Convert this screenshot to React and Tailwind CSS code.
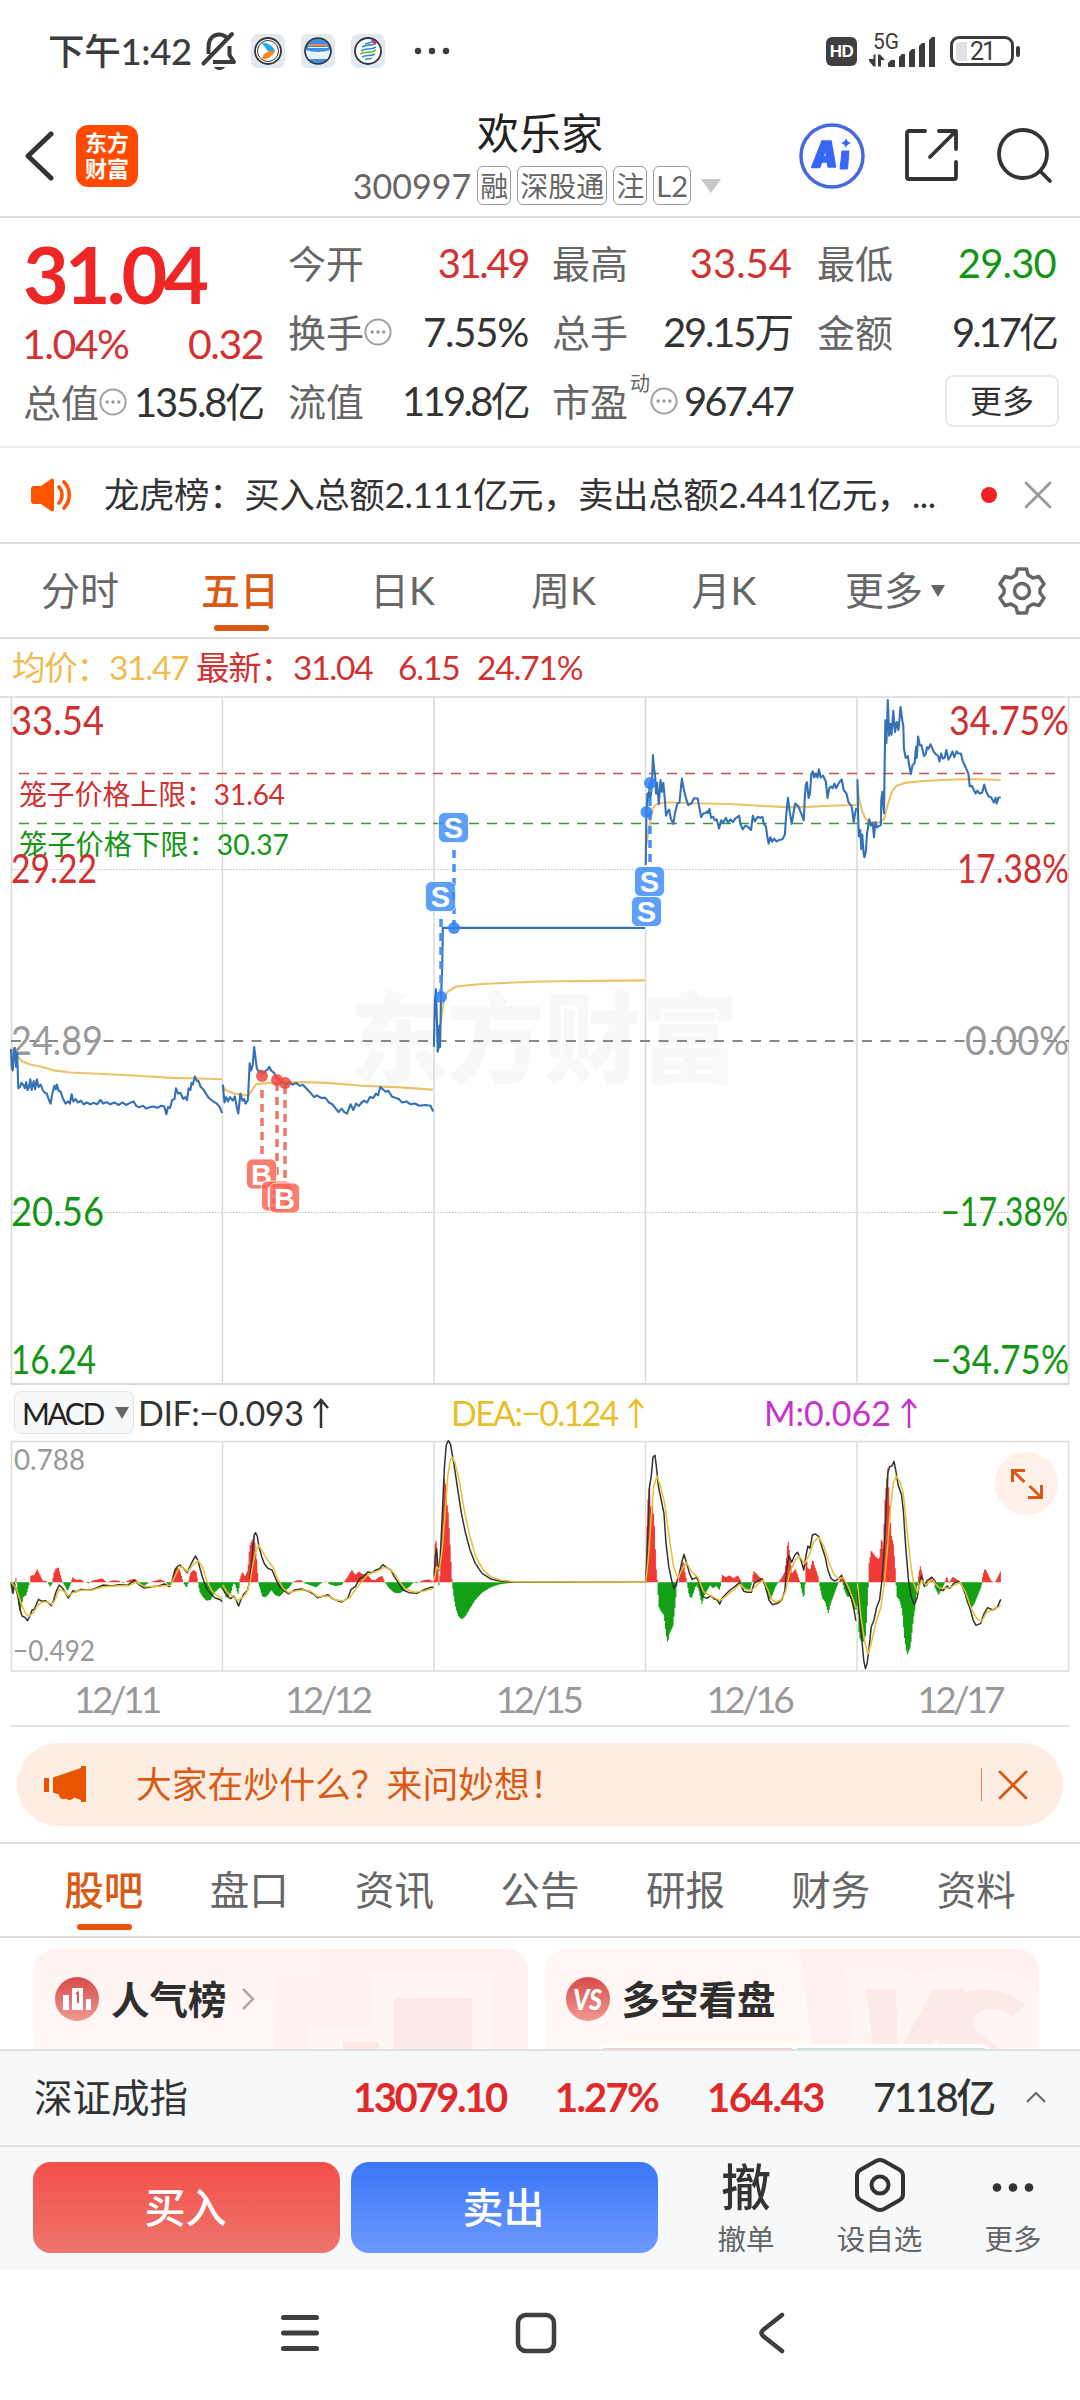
import React from 'react';

const FONT = "Lato, 'Noto Sans CJK SC', sans-serif";

// Séries du graphique : une liste "x,y" par séance
const PRICE_LEFT = [
  '32,1005 34,1060 37,1065 40,1010 43,1002 46,1055 50,1015 53,1115 58,1112 62,1100 68,1106 72,1115 76,1098 80,1120 84,1112 88,1090 92,1120 98,1095 102,1118 107,1090 112,1112 118,1105 124,1120 130,1128 136,1130 142,1148 147,1158 152,1130 158,1108 162,1118 165,1105 170,1122 176,1125 182,1142 190,1158 198,1152 203,1158 208,1132 213,1152 220,1145 226,1155 235,1150 243,1160 252,1155 262,1160 272,1156 282,1160 292,1148 300,1158 310,1154 320,1160 332,1155 345,1162 355,1155 366,1162 378,1156 388,1152 396,1165 405,1168 415,1164 425,1172 435,1168 445,1166 458,1170 468,1164 477,1166 483,1188 488,1168 494,1170 500,1148 507,1145 511,1115 517,1130 524,1128 532,1145 538,1140 543,1148 548,1115 553,1120 556,1100 560,1105 566,1082 572,1095 576,1094 582,1110 590,1118 598,1130 606,1142 614,1148 622,1154 630,1158 638,1168 645,1185',
  '647,1105 652,1155 657,1140 662,1152 668,1140 676,1150 682,1138 688,1170 692,1186 698,1130 704,1150 709,1145 713,1158 720,1148 725,1045 729,1065 734,1050 738,1000 742,1030 746,1060 752,1070 758,1066 764,1075 772,1066 778,1062 782,1055 788,1066 796,1072 802,1085 810,1092 820,1096 830,1105 840,1098 850,1105 860,1100 870,1108 880,1106 890,1116 900,1126 912,1140 920,1135 932,1142 945,1142 955,1155 965,1160 975,1172 983,1182 992,1172 1000,1182 1008,1186 1018,1160 1026,1176 1034,1158 1042,1165 1050,1155 1058,1150 1066,1155 1074,1140 1084,1142 1092,1130 1098,1135 1104,1112 1112,1118 1120,1125 1128,1122 1138,1138 1148,1142 1158,1145 1168,1155 1180,1152 1192,1160 1205,1158 1218,1164 1235,1162 1250,1164 1258,1180',
  '1260,1000 1263,870 1266,838 1269,930 1271,1013 1274,1000 1276,940 1278,1000 1281,850 1284,790 1286,666 1873,666',
];
const PRICE_RIGHT = [
  '307,490 309,350 312,290 315,310 318,262 321,300 325,270 328,182 331,220 334,235 337,290 340,260 345,320 350,252 354,285 358,260 362,300 366,352 371,340 375,335 380,360 387,375 393,340 399,318 405,315 412,248 417,275 423,300 430,322 440,318 447,303 458,304 462,325 468,356 475,345 480,345 485,340 488,345 492,333 497,358 503,355 508,365 513,362 520,388 526,365 532,372 540,358 546,372 553,362 560,370 567,360 578,352 583,378 589,390 596,380 603,382 613,392 618,352 624,368 632,355 640,358 646,355 650,375 656,382 660,410 664,430 669,412 674,425 680,416 686,424 695,420 704,418 711,405 715,350 720,302 725,340 731,375 737,340 741,318 750,325 757,342 766,365 769,300 772,265 775,258 780,302 784,290 788,235 792,228 796,245 801,235 806,245 810,222 815,245 822,240 830,256 835,302 840,275 845,270 850,275 855,262 860,275 868,260 876,250 882,280 890,290 896,315 905,325 911,370 916,340 919,330',
  '922,250 924,360 926,410 930,392 933,445 936,405 939,450 942,468 946,455 950,400 956,362 961,380 966,372 970,412 974,370 979,385 985,380 990,378 991,310 994,285 997,320 999,345 1001,200 1003,85 1006,148 1010,28 1014,128 1018,95 1021,125 1026,58 1031,118 1036,90 1041,112 1047,48 1052,85 1055,100 1057,165 1062,190 1068,185 1073,215 1077,235 1082,210 1088,205 1092,160 1094,190 1098,130 1103,155 1108,155 1115,185 1120,180 1124,160 1128,165 1134,152 1140,165 1145,175 1150,180 1156,185 1160,200 1165,178 1170,192 1175,190 1180,168 1186,195 1192,185 1198,172 1203,188 1210,172 1215,178 1222,178 1228,200 1234,212 1240,225 1244,235 1248,270 1254,268 1260,280 1265,290 1270,282 1277,290 1284,288 1290,265 1296,285 1303,298 1310,300 1318,315 1323,302 1326,318 1331,302 1338,300',
];
const AVG_LEFT = [
  '34,1000 42,1012 50,1025 62,1038 85,1048 120,1055 155,1065 205,1071 300,1075 400,1080 500,1086 580,1088 645,1090',
  '647,1110 655,1120 680,1130 700,1133 722,1135 735,1115 745,1103 790,1100 880,1098 950,1100 1050,1108 1150,1112 1257,1119',
  '1276,960 1281,925 1286,890 1290,860 1300,845 1325,830 1400,823 1568,816 1873,813',
];
const AVG_RIGHT = [
  '310,430 315,390 322,360 328,330 335,322 345,318 365,315 450,317 550,319 650,325 720,328 766,328 840,324 920,322',
  '922,275 928,310 935,338 945,360 955,370 985,372 1000,360 1010,320 1022,285 1035,268 1060,260 1110,255 1170,252 1250,249 1338,252',
];

const DIF_LEFT = [
  '32,637 38,670 42,640 46,655 52,680 58,718 64,738 72,742 80,752 88,735 93,720 100,718 106,702 112,688 122,694 132,692 140,698 149,707 156,690 163,665 172,645 182,655 190,668 198,684 206,672 212,662 222,665 235,658 250,661 265,659 280,654 300,645 325,648 345,644 370,646 390,632 405,645 420,654 440,650 460,648 478,642 492,650 500,635 508,600 515,590 522,585 530,592 537,600 544,608 552,588 560,572 568,558 575,572 582,600 590,628 600,655 612,672 625,684 640,689 645,695',
  '647,655 653,668 661,680 670,686 678,678 686,690 693,708 700,688 708,672 718,662 724,640 730,590 735,530 738,495 742,488 747,498 752,530 760,560 768,582 778,595 790,600 800,625 812,650 825,662 838,672 855,660 875,657 895,663 910,672 922,683 940,678 952,674 965,686 980,692 993,696 1010,684 1020,658 1032,650 1045,625 1055,622 1068,606 1080,608 1092,600 1102,596 1112,584 1122,592 1135,600 1145,620 1158,640 1170,660 1188,668 1210,670 1230,660 1250,652 1259,652',
  '1261,620 1264,560 1268,535 1272,590 1276,600 1280,530 1285,420 1290,300 1296,225 1302,212 1308,222 1318,280 1328,350 1340,430 1352,490 1365,540 1380,580 1400,610 1425,627 1455,634 1500,636 1873,637',
];
const DIF_RIGHT = [
  '307,637 312,520 318,350 323,320 328,262 334,256 338,290 344,350 352,390 360,430 366,520 374,590 382,630 389,656 396,640 404,615 411,580 418,553 426,580 434,610 442,628 455,622 463,640 472,680 485,685 495,677 508,688 515,690 522,702 530,683 540,672 552,660 566,650 580,637 592,664 602,667 614,667 622,640 634,632 645,626 655,650 665,690 675,704 690,700 702,690 711,662 716,600 723,556 731,577 740,555 748,547 757,568 766,600 772,560 778,528 784,535 791,495 800,492 810,500 820,535 828,560 836,600 845,625 855,633 865,628 876,616 885,640 895,665 906,690 912,720 917,752',
  '922,660 928,740 934,800 940,870 945,896 950,880 956,830 962,770 970,750 978,710 986,690 992,640 998,560 1005,420 1010,310 1015,290 1022,288 1028,274 1033,300 1040,345 1050,375 1055,420 1062,530 1070,630 1078,680 1087,704 1096,680 1102,640 1108,618 1116,650 1124,632 1138,622 1146,632 1158,655 1170,662 1182,648 1190,655 1202,640 1215,634 1225,645 1238,680 1250,720 1258,750 1266,766 1280,760 1290,730 1300,713 1315,720 1328,712 1338,688',
];
const DEA_LEFT = [
  '32,637 45,650 55,680 65,710 75,732 85,738 97,728 110,705 122,697 135,695 150,703 160,690 172,658 185,663 198,678 212,668 235,661 265,661 300,650 345,647 375,647 395,636 420,650 460,649 495,646 505,625 518,597 527,590 545,605 560,585 575,572 588,590 600,630 615,662 630,677 645,686',
  '647,645 660,668 675,678 690,692 705,682 718,664 727,630 735,580 742,545 750,525 760,540 775,568 792,590 808,630 822,655 838,668 860,662 885,659 905,666 922,680 952,678 975,690 995,693 1015,684 1030,662 1045,642 1062,620 1080,608 1100,602 1115,592 1130,596 1145,610 1160,635 1178,658 1205,667 1235,662 1259,655',
  '1261,630 1268,590 1276,598 1284,540 1292,440 1300,320 1308,270 1314,262 1322,280 1335,340 1350,430 1365,500 1382,560 1402,598 1425,620 1455,631 1500,635 1873,637',
];
const DEA_RIGHT = [
  '307,637 315,560 322,460 330,350 340,318 350,350 362,400 375,500 388,590 400,625 412,600 425,577 440,605 458,622 475,665 495,677 522,692 545,675 580,643 597,658 614,662 630,645 648,630 660,655 672,688 685,696 700,690 713,665 725,610 740,572 752,558 768,580 782,555 795,515 810,502 825,530 840,580 855,615 868,626 880,622 895,650 910,690 917,715',
  '922,640 932,740 942,810 952,852 962,820 975,760 990,710 1000,640 1010,520 1018,410 1026,340 1034,318 1045,335 1055,370 1065,470 1075,570 1085,640 1096,667 1108,630 1120,645 1138,628 1160,655 1185,655 1220,637 1235,665 1252,715 1268,745 1282,755 1298,725 1315,720 1330,712 1338,705',
];
const HIST_LEFT =
  '30,637 36,672 40,650 43,637 46,622 49,640 52,680 56,725 62,712 68,680 76,676 84,645 87,637 89,617 100,615 108,597 116,615 124,632 132,632 138,637 146,650 152,640 156,610 162,596 170,592 178,625 182,637 190,650 196,664 204,645 207,637 210,622 222,630 235,628 245,637 258,640 268,632 285,628 297,625 310,637 328,631 345,632 358,640 375,630 392,626 402,637 418,648 432,638 445,634 465,628 475,633 482,637 492,648 497,637 505,605 512,590 522,600 532,637 542,654 547,637 553,610 562,600 570,606 575,637 580,665 590,682 600,692 612,690 625,665 640,652 645,660 649,650 656,682 664,680 672,665 677,640 684,645 691,675 695,650 697,625 704,605 712,620 720,600 725,530 730,515 738,500 745,560 750,637 755,655 762,680 770,682 778,675 788,660 800,676 812,680 825,665 840,652 850,637 862,631 875,631 885,640 900,645 918,652 932,640 945,634 958,643 975,648 992,645 1000,634 1010,620 1022,600 1032,615 1042,604 1052,612 1065,612 1080,630 1090,630 1100,622 1110,618 1118,637 1130,655 1145,668 1160,670 1175,660 1190,650 1200,637 1210,640 1225,632 1245,628 1259,635 1261,600 1265,490 1270,560 1274,640 1276,658 1278,600 1284,480 1288,350 1292,318 1297,390 1302,430 1308,540 1313,637 1318,680 1324,715 1332,740 1342,748 1352,738 1365,715 1380,690 1400,668 1425,652 1450,643 1480,639 1520,637';
const HIST_RIGHT =
  '308,600 312,405 317,345 323,430 327,400 332,460 337,590 341,637 345,710 352,725 360,735 366,790 371,820 376,790 386,770 392,710 398,640 402,637 408,610 415,570 422,610 427,640 434,680 440,684 447,665 453,645 460,655 470,702 478,675 486,660 494,645 502,655 512,648 522,660 526,637 529,615 540,622 550,616 562,625 575,616 583,632 590,652 600,660 610,658 615,640 620,603 628,610 636,620 645,628 652,645 660,672 668,690 676,672 684,650 694,635 704,620 711,605 716,560 720,505 726,560 732,610 742,597 750,620 756,640 762,670 766,688 770,640 773,560 778,595 785,600 792,568 800,595 808,620 812,645 820,685 828,695 837,730 845,698 852,680 862,650 870,632 876,615 882,655 892,680 900,680 910,715 919,720 922,700 927,800 932,812 940,815 946,795 951,700 954,637 956,580 962,540 968,552 975,560 985,570 992,500 997,540 1001,400 1005,350 1010,295 1015,400 1020,495 1026,520 1032,600 1036,680 1044,690 1052,720 1058,800 1066,855 1076,830 1084,750 1090,710 1096,650 1099,620 1104,587 1110,610 1116,640 1124,650 1128,637 1134,620 1142,628 1148,655 1158,675 1168,655 1175,640 1181,618 1188,640 1198,620 1210,628 1222,637 1230,655 1240,700 1250,718 1262,700 1272,675 1282,650 1286,615 1292,595 1300,610 1310,632 1320,638 1328,625 1337,604';

const DAY_LINES = [222.5, 434, 645.5, 857];

// Interpole l'histogramme et sépare les barres positives et négatives
const buildBars = (data) => {
  const pts = data.split(' ').map((p) => p.split(',').map(Number));
  let up = '';
  let down = '';
  let i = 0;
  for (let x = pts[0][0]; x <= pts[pts.length - 1][0]; x += 2.7) {
    while (i < pts.length - 2 && pts[i + 1][0] < x) i += 1;
    const [x0, y0] = pts[i];
    const [x1, y1] = pts[i + 1];
    const y = y0 + ((y1 - y0) * (x - x0)) / (x1 - x0);
    if (y < 636) up += `M${x.toFixed(1)} 637V${y.toFixed(1)}`;
    else if (y > 638) down += `M${x.toFixed(1)} 637V${y.toFixed(1)}`;
  }
  return { up, down };
};

const Series = ({ data, color, width = 2.1 }) =>
  data.map((points) => (
    <polyline
      key={points.slice(0, 12)}
      points={points}
      fill="none"
      stroke={color}
      strokeWidth={width}
      strokeLinejoin="round"
      vectorEffect="non-scaling-stroke"
    />
  ));

const Histogram = ({ data }) => {
  const { up, down } = buildBars(data);
  return (
    <>
      <path d={up} stroke="#f23a35" strokeWidth="1.1" vectorEffect="non-scaling-stroke" />
      <path d={down} stroke="#14a014" strokeWidth="1.1" vectorEffect="non-scaling-stroke" />
    </>
  );
};

const Label = ({ x, y, w, size = 41, color, children, ...rest }) => (
  <text x={x} y={y} textLength={w} lengthAdjust="spacingAndGlyphs" fontSize={size} fill={color} fontFamily={FONT} {...rest}>
    {children}
  </text>
);

const Marker = ({ x, y, type }) => (
  <g>
    <rect
      x={x - 15}
      y={y - 15}
      width="30"
      height="30"
      rx="6"
      fill={type === 'S' ? '#3b8af8' : '#f8624f'}
      fillOpacity="0.82"
      stroke="#fff"
      strokeWidth="0.8"
    />
    <text x={x} y={y + 10.5} textAnchor="middle" fontSize="29" fontWeight="700" fill="#fff" fontFamily="'Liberation Sans', sans-serif">
      {type}
    </text>
  </g>
);

const MoreHint = () => (
  <svg className="shrink-0" width="28" height="30" viewBox="0 0 28 30" fill="none">
    <circle cx="14" cy="15" r="12.6" stroke="#a0a0a0" strokeWidth="2" />
    <circle cx="8.2" cy="15" r="1.7" fill="#999" />
    <circle cx="14" cy="15" r="1.7" fill="#999" />
    <circle cx="19.8" cy="15" r="1.7" fill="#999" />
  </svg>
);

const StatusBar = () => (
  <div className="flex h-[105px] items-center justify-between pb-[3px] pl-12 pr-[60px] text-[#3c3c3c]">
    <div className="flex items-center">
      <span className="w-[146px] whitespace-nowrap text-[36.5px] font-medium leading-none tracking-[-0.3px]">下午1:42</span>
      <svg className="ml-[6px]" width="38" height="40" viewBox="0 0 38 40" fill="none" stroke="#3c3c3c" strokeWidth="4">
        <path d="M8.500 23V16C8.500 8 13 3.500 19 3.500c3 0 5.500 1 7.500 3" />
        <path d="M29.500 15v9l4.500 7H13" strokeLinejoin="round" />
        <path d="M3.500 32.500 32 3" strokeLinecap="round" />
        <path d="M14 36h11c-2 4-9 4-11 0z" fill="#3c3c3c" stroke="none" />
      </svg>
      <div className="ml-[13px] flex gap-4">
        <svg width="34" height="34" viewBox="0 0 34 34">
          <rect width="34" height="34" rx="7" fill="#e4e9ef" />
          <circle cx="17" cy="17" r="13" fill="#fff" stroke="#30343c" strokeWidth="1.800" />
          <circle cx="17" cy="17" r="10.500" fill="#fff" stroke="#30343c" strokeWidth="1" />
          <path d="M11 9c5-1 11 3 13 8-3 2-7 1-8-1z" fill="#22a9ee" />
          <path d="M24 17c-2 5-8 9-13 8 1-5 5-9 13-8z" fill="#f58a1e" />
        </svg>
        <svg width="34" height="34" viewBox="0 0 34 34">
          <rect width="34" height="34" rx="7" fill="#e4e9ef" />
          <circle cx="17" cy="17" r="13" fill="#3f8fdf" />
          <path d="M5 16c7 2.500 17 2.500 24 0v3l-2 6H7l-2-6z" fill="#e8f3fd" />
          <path d="M8 11h18" stroke="#e8855a" strokeWidth="2" />
          <path d="M7 13.500h20" stroke="#fff" strokeWidth="1" />
          <circle cx="17" cy="17" r="13" fill="none" stroke="#30343c" strokeWidth="1.600" />
        </svg>
        <svg width="34" height="34" viewBox="0 0 34 34" fill="none">
          <rect width="34" height="34" rx="7" fill="#e4e9ef" />
          <circle cx="17" cy="17" r="13" fill="#fff" stroke="#30343c" strokeWidth="1.800" />
          <path d="M11 13c4-3 9-1 13-3M10 17c5-4 9 0 15-4" stroke="#2a8fc8" strokeWidth="1.600" />
          <path d="M9 20c6-4 9 1 16-4" stroke="#7cb83a" strokeWidth="1.800" />
          <path d="M11 23c5-3 8 0 13-3M14 25.500c3-1 5 0 7-1.500M14 10c3-1 5-1 7-2" stroke="#2a8fc8" strokeWidth="1.500" />
          <path d="m21 6 4 4" stroke="#d0307c" strokeWidth="3" />
        </svg>
      </div>
      <svg className="ml-7" width="38" height="8" viewBox="0 0 38 8" fill="#3c3c3c">
        <circle cx="5" cy="4" r="3.200" />
        <circle cx="19" cy="4" r="3.200" />
        <circle cx="33" cy="4" r="3.200" />
      </svg>
    </div>
    <div className="flex items-center">
      <div className="flex h-[29px] w-[31px] items-center justify-center rounded-[6px] bg-[#3f3f3f] font-['Liberation_Sans',sans-serif] text-[17px] font-bold leading-none tracking-[-0.5px] text-white">
        HD
      </div>
      <svg className="ml-[12px] -mt-[3px]" width="68" height="38" viewBox="0 -2 68 38" fill="#3c3c3c">
        <text x="4" y="15.500" fontSize="22" fontFamily="Roboto, sans-serif" textLength="26" lengthAdjust="spacingAndGlyphs">5G</text>
        <path d="M0 28V26H4.500V21.500H6.500V33.500H4.500zM9 33.500V21.500H11L16 27H12V33.500z" />
        <path d="M19 34v-4l3-3h4v7zM30 34v-10l3-3h3v13zM40 34v-15l3-3h3v18zM50 34v-21l3-3h3v24zM60 34V7l3-3h3v30z" />
      </svg>
      <div className="ml-[13px] flex h-[30px] w-[64px] items-center rounded-[9px] border-[3px] border-[#3c3c3c] pl-[3px]">
        <div className="h-[19px] w-[11px] rounded-l-[4px] bg-[#e2e2e2]" />
        <span className="ml-[3px] font-['Roboto',sans-serif] text-[25px] leading-none tracking-[-2px]">21</span>
      </div>
      <div className="ml-[2px] h-[11px] w-[4px] rounded-full bg-[#3c3c3c]" />
    </div>
  </div>
);

const Header = () => (
  <header className="flex h-[113px] justify-between border-b-2 border-[#dcdcdc] px-[24px]">
    <div className="flex h-[102px] w-[300px] items-center">
      <svg width="30" height="50" viewBox="0 0 30 50" fill="none" stroke="#333" strokeWidth="5" strokeLinecap="round" strokeLinejoin="round">
        <path d="M27 3 4 25 27 47" />
      </svg>
      <div className="ml-[22px] flex h-[62px] w-[62px] flex-col items-center justify-center rounded-[12px] bg-[#ff4a00] text-[22px] font-bold leading-[26px] text-white">
        <span>东方</span>
        <span>财富</span>
      </div>
    </div>
    <div className="flex flex-col items-center">
      <h1 className="mt-[6px] text-[42px] font-normal leading-[44px] text-[#222]">欢乐家</h1>
      <div className="mr-[6px] mt-[11px] flex items-center gap-[6px] text-[31px] leading-none text-[#666]">
        <span className="text-[34px]">300997</span>
        <span className="flex h-[39px] w-[34px] items-center justify-center rounded-[6px] border-[1.5px] border-[#999] text-[28px]">融</span>
        <span className="flex h-[39px] w-[90px] items-center justify-center rounded-[6px] border-[1.5px] border-[#999] text-[28px]">深股通</span>
        <span className="flex h-[39px] w-[34px] items-center justify-center rounded-[6px] border-[1.5px] border-[#999] text-[28px]">注</span>
        <span className="flex h-[39px] w-[38px] items-center justify-center rounded-[6px] border-[1.5px] border-[#999] text-[29px]">L2</span>
        <svg className="ml-[4px]" width="20" height="14" viewBox="0 0 20 14" fill="#c8c8c8">
          <path d="M0 0h20L10 14z" />
        </svg>
      </div>
    </div>
    <div className="flex h-[102px] w-[300px] items-center justify-end">
      <svg width="66" height="66" viewBox="0 0 66 66">
        <circle cx="33" cy="33" r="31" fill="none" stroke="#4468e0" strokeWidth="3.500" />
        <path fillRule="evenodd" d="M23 18h9l4.500 26h-7.500l-.6-5h-5.600l-2.200 5.500h-8zM26.500 27l-2.500 6.500h3.800z" fill="#3866fa" stroke="#3866fa" strokeWidth="1.500" strokeLinejoin="round" />
        <path d="M43 28h7l-1.500 18h-7.500z" fill="#3866fa" stroke="#3866fa" strokeWidth="1" strokeLinejoin="round" />
        <path d="M47 15q1 4 5 5-4 1-5 5-1-4-5-5 4-1 5-5z" fill="#3866fa" />
      </svg>
      <svg className="ml-[39px]" width="56" height="56" viewBox="0 0 56 56" fill="none" stroke="#333" strokeWidth="3.800" strokeLinecap="round" strokeLinejoin="round">
        <path d="M21 3H5a2 2 0 0 0-2 2v44a2 2 0 0 0 2 2h45a2 2 0 0 0 2-2V34" />
        <path d="M35 3h17v18M51 4 26 29" />
      </svg>
      <svg className="ml-[37px] mr-[3px]" width="56" height="56" viewBox="0 0 56 56" fill="none" stroke="#333" strokeWidth="3.800" strokeLinecap="round">
        <circle cx="26" cy="26" r="24" />
        <path d="m43 43 10 10" />
      </svg>
    </div>
  </header>
);

const QuoteItem = ({ label, value, hint, sup, color = 'text-[#333]', track = 'tracking-[-2px]' }) => (
  <div className="flex h-[69px] items-center justify-between whitespace-nowrap">
    <span className="flex items-center text-[38px] text-[#666]">
      {label}
      {sup && <span className="-mt-9 ml-[2px] text-[20px] leading-none">{sup}</span>}
      {hint && <MoreHint />}
    </span>
    <span className={`text-[40px] ${color} ${track}`}>{value}</span>
  </div>
);

const QuotePanel = () => (
  <section className="flex h-[230px] border-b-2 border-[#ededed] pl-[24px] pr-[24px] pt-[10px] leading-none">
    <div className="-ml-[1px] w-[240px]">
      <div className="mt-[10px] h-[72px] text-[79px] font-bold leading-[72px] tracking-[-4px] text-[#ee2626]">31.04</div>
      <div className="mt-[10px] flex h-[46px] items-center justify-between text-[41px] tracking-[-1.5px] text-[#d23232]">
        <span className="-ml-[1px]">1.04%</span>
        <span>0.32</span>
      </div>
      <div className="mt-[1px]">
        <QuoteItem label="总值" value="135.8亿" hint track="tracking-[-2.2px]" />
      </div>
    </div>
    <div className="ml-[25px] w-[240px]">
      <QuoteItem label="今开" value="31.49" color="text-[#d23232]" track="tracking-[-2.4px]" />
      <QuoteItem label="换手" value="7.55%" hint track="tracking-[-1.2px]" />
      <QuoteItem label="流值" value="119.8亿" track="tracking-[-2.7px]" />
    </div>
    <div className="ml-[24px] w-[240px]">
      <QuoteItem label="最高" value="33.54" color="text-[#d23232]" track="tracking-[0px]" />
      <QuoteItem label="总手" value="29.15万" track="tracking-[-2.2px]" />
      <QuoteItem label="市盈" value="967.47" sup="动" hint track="tracking-[-2.9px]" />
    </div>
    <div className="ml-[25px] w-[239px]">
      <QuoteItem label="最低" value="29.30" color="text-[#149614]" track="tracking-[-0.8px]" />
      <QuoteItem label="金额" value="9.17亿" track="tracking-[-3px]" />
      <div className="flex h-[69px] items-center justify-end">
        <button className="-mr-[3px] h-[52px] w-[114px] rounded-[8px] border-2 border-[#e8eaec] text-[32px] text-[#333]">更多</button>
      </div>
    </div>
  </section>
);

const NewsBar = () => (
  <section className="flex h-[96px] items-center border-b-2 border-[#dcdcdc] pl-[31px] pr-[27px]">
    <svg width="42" height="36" viewBox="0 0 42 36" fill="none">
      <path d="M3 9h7L20 2c2-1 3 0 3 2v28c0 2-1 3-3 2l-10-7H3c-2 0-3-1-3-3V12c0-2 1-3 3-3z" fill="#ff5500" />
      <path d="M28 10c4 4 4 12 0 16M33 5c7 7 7 19 0 26" stroke="#ff5500" strokeWidth="3.600" strokeLinecap="round" />
    </svg>
    <span className="ml-[31px] w-[834px] whitespace-nowrap text-[35.5px] leading-none tracking-[-0.45px] text-[#333]">
      龙虎榜：买入总额2.111亿元，卖出总额2.441亿元，...
    </span>
    <span className="ml-[43px] h-4 w-4 rounded-full bg-[#ee2222]" />
    <svg className="ml-[27px]" width="28" height="28" viewBox="0 0 28 28" stroke="#999" strokeWidth="2.800" strokeLinecap="round">
      <path d="m2 2 24 24M26 2 2 26" />
    </svg>
  </section>
);

const PeriodTabs = () => (
  <nav className="flex h-[95px] items-center border-b-2 border-[#dcdcdc] text-[39px] leading-none text-[#666]">
    <span className="w-40 text-center">分时</span>
    <span className="relative w-40 text-center font-medium text-[#d95a14]">
      五日
      <span className="absolute -bottom-[21px] left-[54px] h-[6px] w-[55px] rounded-full bg-[#d95a14]" />
    </span>
    <span className="w-[165px] text-center">日K</span>
    <span className="w-[157px] text-center">周K</span>
    <span className="w-[164px] text-center">月K</span>
    <span className="ml-[39px] flex items-center gap-[8px]">
      更多
      <svg width="14" height="12" viewBox="0 0 14 12" fill="#666">
        <path d="M0 0h14L7 12z" />
      </svg>
    </span>
    <svg className="ml-[52px]" width="50" height="50" viewBox="0 0 50 50" fill="none" stroke="#666" strokeWidth="3.500" strokeLinejoin="round">
      <path d="M20.500 3h9l1.500 6 5 3 6-1.500 5 7.500-4 5v4l4 5-5 7.500-6-1.500-5 3-1.500 6h-9L19 41l-5-3-6 1.500L3 32l4-5v-4l-4-5 5-7.500L14 12l5-3z" />
      <circle cx="25" cy="25" r="7.500" />
    </svg>
  </nav>
);

const PriceChart = () => (
  <section>
    <div className="flex h-[57px] items-center whitespace-pre pl-[12px] text-[33.5px] leading-none tracking-[-1.2px] text-[#d03232]">
      <span className="w-[184px] text-[#eebc50]">均价：31.47</span>
      <span className="w-[202px]">最新：31.04</span>
      <span className="w-[79px]">6.15</span>
      <span>24.71%</span>
    </div>
    <svg className="block" width="1080" height="689" viewBox="0 696 1080 689">
      <g fontFamily="'Noto Sans CJK SC', sans-serif" fontSize="98" fontWeight="900" fill="#f8f8f8">
        <text x="350" y="1075" textLength="388" lengthAdjust="spacingAndGlyphs">东方财富</text>
      </g>
      <g fill="none" stroke="#d9d9d9" strokeWidth="1.500">
        <path d="M0 697H1080" />
        <path d="M11.500 697V1384M1068.500 697V1384" />
        {DAY_LINES.map((x) => (
          <path key={x} d={`M${x} 698V1384`} />
        ))}
        <path d="M11 1384H1069" strokeWidth="2" />
        <path d="M11 869.500H1069M11 1212.500H1069" stroke="#c4c4c4" strokeWidth="1" strokeDasharray="1.500 1.500" />
      </g>
      <path d="M19 773.500H1056" stroke="#c65050" strokeWidth="1.500" strokeDasharray="10 8" />
      <path d="M19 823.500H1056" stroke="#419441" strokeWidth="1.500" strokeDasharray="10 8" />
      <path d="M11 1041H1069" stroke="#888" strokeWidth="2" strokeDasharray="10 8.500" />
      <Label x="11" y="735" w="93" color="#d03030">33.54</Label>
      <Label x="19" y="805" w="266" size="28" color="#d03030">笼子价格上限：31.64</Label>
      <Label x="19" y="855" w="270" size="28" color="#149614">笼子价格下限：30.37</Label>
      <Label x="11" y="883" w="86" color="#d03030">29.22</Label>
      <Label x="11" y="1055" w="92" color="#999">24.89</Label>
      <Label x="11" y="1226" w="93" color="#149614">20.56</Label>
      <Label x="11" y="1374" w="85" color="#149614">16.24</Label>
      <Label x="949" y="735" w="120" color="#d03030">34.75%</Label>
      <Label x="957" y="883" w="112" color="#d03030">17.38%</Label>
      <Label x="965" y="1055" w="104" color="#999">0.00%</Label>
      <Label x="941" y="1226" w="127" color="#149614">−17.38%</Label>
      <Label x="931" y="1374" w="138" color="#149614">−34.75%</Label>

      <g transform="translate(0 690) scale(0.34435 0.35714)">
        <Series data={AVG_LEFT} color="#edc06a" />
        <Series data={PRICE_LEFT} color="#3571b5" />
      </g>
      <g transform="translate(540 690) scale(0.34435 0.35714)">
        <Series data={AVG_RIGHT} color="#edc06a" />
        <Series data={PRICE_RIGHT} color="#3571b5" />
      </g>

      {/* Points d'achat et de vente */}
      <g fill="none" strokeWidth="3.500" strokeDasharray="8 6">
        <path d="M262 1090V1155M277 1083V1180M285 1086V1184" stroke="#ee7868" />
        <path d="M454 850V925M441 919V995" stroke="#4a90f8" />
        <path d="M650 784V862" stroke="#4a90f8" />
      </g>
      <g fill="#f0493e" fillOpacity="0.85">
        <circle cx="262" cy="1076" r="6" />
        <circle cx="277" cy="1080" r="6" />
        <circle cx="285" cy="1083" r="6" />
      </g>
      <g fill="#2d80f5" fillOpacity="0.85">
        <circle cx="454" cy="928" r="6" />
        <circle cx="441" cy="997" r="6" />
        <circle cx="650" cy="783" r="6" />
        <circle cx="646.500" cy="812" r="6" />
      </g>
      <Marker x={261.500} y={1174} type="B" />
      <Marker x={276.500} y={1196} type="B" />
      <Marker x={284.500} y={1198} type="B" />
      <Marker x={453.500} y={827.500} type="S" />
      <Marker x={440.500} y={896.500} type="S" />
      <Marker x={649.500} y={881.500} type="S" />
      <Marker x={646.500} y={911.500} type="S" />
    </svg>
  </section>
);

const Arrow = ({ color }) => (
  <svg className="ml-[9px]" width="18" height="32" viewBox="0 0 18 32" fill="none" stroke={color} strokeWidth="2.500">
    <path d="M9 31V3M2 11l7-8 7 8" />
  </svg>
);

const MacdChart = () => (
  <section>
    <div className="flex h-[55px] items-center text-[34px] leading-none">
      <button className="ml-[14px] flex h-[43px] w-[120px] items-center rounded-[7px] border-[1.5px] border-[#e4e7ea] bg-[#f6f8fa] pl-[7px] text-[30px] tracking-[-2.4px] text-[#222]">
        MACD
        <svg className="ml-[12px] shrink-0" width="14" height="12" viewBox="0 0 14 12" fill="#666">
          <path d="M0 0h14L7 12z" />
        </svg>
      </button>
      <span className="ml-[4px] flex w-[313px] items-center tracking-[-0.4px] text-[#333]">
        DIF:−0.093
        <Arrow color="#333" />
      </span>
      <span className="flex w-[313px] items-center tracking-[-1.7px] text-[#e8bf28]">
        DEA:−0.124
        <Arrow color="#e8bf28" />
      </span>
      <span className="flex items-center text-[#c633cc]">
        M:0.062
        <Arrow color="#c633cc" />
      </span>
    </div>
    <svg className="block" width="1080" height="234" viewBox="0 1440 1080 234">
      <g fill="none" stroke="#dcdcdc" strokeWidth="1.500">
        <rect x="11.500" y="1441.500" width="1057" height="229.500" />
        {DAY_LINES.map((x) => (
          <path key={x} d={`M${x} 1441V1671`} />
        ))}
      </g>
      <g transform="translate(0 1370) scale(0.34435 0.33333)">
        <Histogram data={HIST_LEFT} />
        <Series data={DIF_LEFT} color="#333" width={1.5} />
        <Series data={DEA_LEFT} color="#e6bf33" width={1.5} />
      </g>
      <g transform="translate(540 1370) scale(0.34435 0.33333)">
        <Histogram data={HIST_RIGHT} />
        <Series data={DIF_RIGHT} color="#333" width={1.5} />
        <Series data={DEA_RIGHT} color="#e6bf33" width={1.5} />
      </g>
      <Label x="14" y="1470" w="71" size="28" color="#999">0.788</Label>
      <Label x="13" y="1661" w="82" size="28" color="#999">−0.492</Label>
      <circle cx="1026.500" cy="1483.500" r="31.500" fill="#fff1ea" />
      <g fill="none" stroke="#d95a14" strokeWidth="3">
        <path d="M1012.500 1482V1470.500H1025M1013 1471l11.500 11M1041.500 1485V1497.500H1028M1041 1497l-11.500-11" />
      </g>
    </svg>
    <div className="mx-[11px] grid h-[53px] grid-cols-5 items-center border-b-2 border-[#e2e2e2] pb-[2px] pr-[4px] text-center text-[37px] leading-none tracking-[-3.6px] text-[#999]">
      {['12/11', '12/12', '12/15', '12/16', '12/17'].map((d) => (
        <span key={d}>{d}</span>
      ))}
    </div>
  </section>
);

const Banner = () => (
  <div className="mx-[17px] mt-[16px] flex h-[83px] items-center rounded-full bg-[#fdede3] pl-[27px] pr-[34px] text-[#d95a14]">
    <svg width="43" height="37" viewBox="0 0 43 37" fill="#e85500">
      <path d="M0 12h5v14H0zM9 11.500 37 2V0h5v36h-5v-2l-7-2.500c-2 3-6 3-8 1-4 2-7-1-7-4l-6-2z" />
    </svg>
    <span className="ml-[49px] flex-1 text-[35.800px] leading-none">大家在炒什么？来问妙想！</span>
    <span className="h-[33px] w-[1.5px] bg-[#e88a58]" />
    <svg className="ml-[15px]" width="32" height="30" viewBox="0 0 32 30" stroke="#d95a14" strokeWidth="2.800" strokeLinecap="round">
      <path d="M3 2 29 28M29 2 3 28" />
    </svg>
  </div>
);

const ContentTabs = () => (
  <nav className="mt-[16px] grid h-[96px] grid-cols-7 items-center border-y-2 border-[#dcdcdc] px-[31px] text-center text-[39.5px] leading-none text-[#666]">
    <span className="relative font-medium text-[#d95a14]">
      股吧
      <span className="absolute -bottom-[20px] left-[46px] h-[6px] w-[55px] rounded-full bg-[#e85500]" />
    </span>
    {['盘口', '资讯', '公告', '研报', '财务', '资料'].map((t) => (
      <span key={t}>{t}</span>
    ))}
  </nav>
);

const Cards = () => (
  <section className="flex h-[111px] gap-[17px] overflow-hidden pl-[33px] pr-[41px] pt-[11px]">
    <div className="relative h-[140px] flex-1 overflow-hidden rounded-[22px] bg-gradient-to-b from-[#fff4f2] to-[#fffaf8]">
      <svg className="absolute left-0 top-0" width="495" height="140" viewBox="0 0 495 140">
        <path d="M288 0H495V140H242V28h46z" fill="#fef1ef" />
        <path d="M338 23H460V140H275V77h63z" fill="#fff6f4" />
        <path d="M361 49h78v91H361zM310 93h36v47H310z" fill="#fce9e7" />
      </svg>
      <div className="relative flex items-center pl-[22px] pt-[28px]">
        <svg width="44" height="44" viewBox="0 0 44 44">
          <defs>
            <linearGradient id="rank" x1="0" y1="0" x2="0" y2="1">
              <stop stopColor="#d64a48" />
              <stop offset="1" stopColor="#f09a94" />
            </linearGradient>
          </defs>
          <circle cx="22" cy="22" r="22" fill="url(#rank)" />
          <path d="M8 18h6v15H8zM17 11h11v22H17zM31 22h5v11h-5z" fill="#fff" />
          <path d="M21 17l2-1.500V26" stroke="#d65a58" strokeWidth="2" fill="none" />
        </svg>
        <span className="ml-[12px] text-[38.5px] font-bold leading-[44px] text-[#2e2e2e]">人气榜</span>
        <svg className="ml-[14px]" width="14" height="22" viewBox="0 0 14 22" fill="none" stroke="#aaa" strokeWidth="2.500">
          <path d="m2 1 10 10L2 21" />
        </svg>
      </div>
    </div>
    <div className="relative h-[140px] flex-1 overflow-hidden rounded-[22px] bg-gradient-to-b from-[#fff6f4] to-[#fffaf6]">
      <svg className="absolute left-0 top-0" width="495" height="140" viewBox="0 0 495 140">
        <path d="M255 0H495V140H272z" fill="#fef1ef" />
        <path d="M301 20h56q12 0 15 10 10-10 22-10h42q45 0 59 25V140H312z" fill="#fff6f4" />
        <path d="M321 40h30l2 66 34-66h34l-44 70H330z" fill="#fceae8" />
        <path d="M481 56q-20-17-50-15-32 4-40 30-5 20 12 33h57q-8-8-20-15-14-9-11-19 5-11 20-10 10 0 17 8z" fill="#fceae8" />
        <rect x="48" y="95" width="402" height="30" rx="15" fill="#fff" />
        <path d="M58 99H247v3H58z" fill="#f0cfcd" />
        <path d="M252 99H440v3H252z" fill="#cfe2d6" />
      </svg>
      <div className="relative flex items-center pl-[21px] pt-[28px]">
        <svg width="44" height="44" viewBox="0 0 44 44">
          <circle cx="22" cy="22" r="22" fill="url(#rank)" />
          <text x="7" y="33" fontSize="29" fontWeight="900" fontStyle="italic" fill="#fff" textLength="29" lengthAdjust="spacingAndGlyphs" fontFamily={FONT}>
            VS
          </text>
        </svg>
        <span className="ml-[12px] text-[38.5px] font-bold leading-[44px] text-[#2e2e2e]">多空看盘</span>
      </div>
    </div>
  </section>
);

const IndexBar = () => (
  <section className="flex h-[98px] items-center border-y-2 border-[#dfe1e3] bg-[#f6f8fa] pb-[2px] pl-[34px] text-[40px] font-bold leading-none tracking-[-2.4px] text-[#e02a2a]">
    <span className="w-[319px] text-[38.5px] font-normal tracking-normal text-[#333]">深证成指</span>
    <span className="w-[202px]">13079.10</span>
    <span className="w-[152px] tracking-[-1.8px]">1.27%</span>
    <span className="w-[166px] tracking-[-1.4px]">164.43</span>
    <span className="w-[153px] font-medium text-[#333]">7118亿</span>
    <svg width="20" height="12" viewBox="0 0 20 12" fill="none" stroke="#666" strokeWidth="2">
      <path d="m1 11 9-9 9 9" />
    </svg>
  </section>
);

const ActionBar = () => (
  <section className="flex h-[123px] bg-[#f6f8fa] pl-[33px] pt-[15px] leading-none">
    <button className="h-[91px] w-[307px] rounded-[18px] bg-gradient-to-b from-[#f34f48] to-[#ed736c] pr-[2px] text-[41px] font-medium text-white">买入</button>
    <button className="ml-[11px] h-[91px] w-[307px] rounded-[18px] bg-gradient-to-b from-[#3a76f6] to-[#6c98ff] pr-[2px] text-[41px] font-medium text-white">卖出</button>
    <div className="flex flex-1 text-[28.5px] text-[#666]">
      <div className="ml-[22px] flex w-[132px] flex-col items-center">
        <span className="flex h-[50px] items-center text-[50px] font-medium leading-none text-[#333]">撤</span>
        <span className="mt-[13px]">撤单</span>
      </div>
      <div className="flex w-[135px] flex-col items-center">
        <svg className="-mt-[5px]" width="52" height="56" viewBox="0 0 52 56" fill="none" stroke="#333" strokeWidth="4" strokeLinejoin="round">
          <path d="M22 4q4-2 8 0l15 8.500q4 2 4 6v19q0 4-4 6L30 52q-4 2-8 0L7 43.500q-4-2-4-6v-19q0-4 4-6z" />
          <circle cx="26" cy="28" r="8.500" />
        </svg>
        <span className="mt-[12px]">设自选</span>
      </div>
      <div className="flex w-[132px] flex-col items-center">
        <svg width="44" height="51" viewBox="0 0 44 51" fill="#333">
          <circle cx="6" cy="25.500" r="4.300" />
          <circle cx="22" cy="25.500" r="4.300" />
          <circle cx="38" cy="25.500" r="4.300" />
        </svg>
        <span className="mt-[12px]">更多</span>
      </div>
    </div>
  </section>
);

const SystemNav = () => (
  <footer className="flex h-[130px] items-center pb-[5px] pl-[281px]">
    <svg width="38" height="40" viewBox="0 0 38 40" fill="none" stroke="#3f3f3f" strokeWidth="5" strokeLinecap="round">
      <path d="M2.500 4.500h33M2.500 20h33M2.500 35.500h33" />
    </svg>
    <svg className="ml-[196px]" width="42" height="42" viewBox="0 0 42 42" fill="none" stroke="#3f3f3f" strokeWidth="4.500">
      <rect x="3" y="3" width="36" height="36" rx="8" />
    </svg>
    <svg className="ml-[201px]" width="28" height="42" viewBox="0 0 28 42" fill="none" stroke="#3f3f3f" strokeWidth="4.500" strokeLinecap="round" strokeLinejoin="round">
      <path d="M24 3 5 18q-3 3 0 6l19 15" />
    </svg>
  </footer>
);

const App = () => (
  <main className="h-[2400px] w-[1080px] overflow-hidden bg-white font-['Lato','Noto_Sans_CJK_SC',sans-serif]">
    <StatusBar />
    <Header />
    <QuotePanel />
    <NewsBar />
    <PeriodTabs />
    <PriceChart />
    <MacdChart />
    <Banner />
    <ContentTabs />
    <Cards />
    <IndexBar />
    <ActionBar />
    <SystemNav />
  </main>
);

export default App;
